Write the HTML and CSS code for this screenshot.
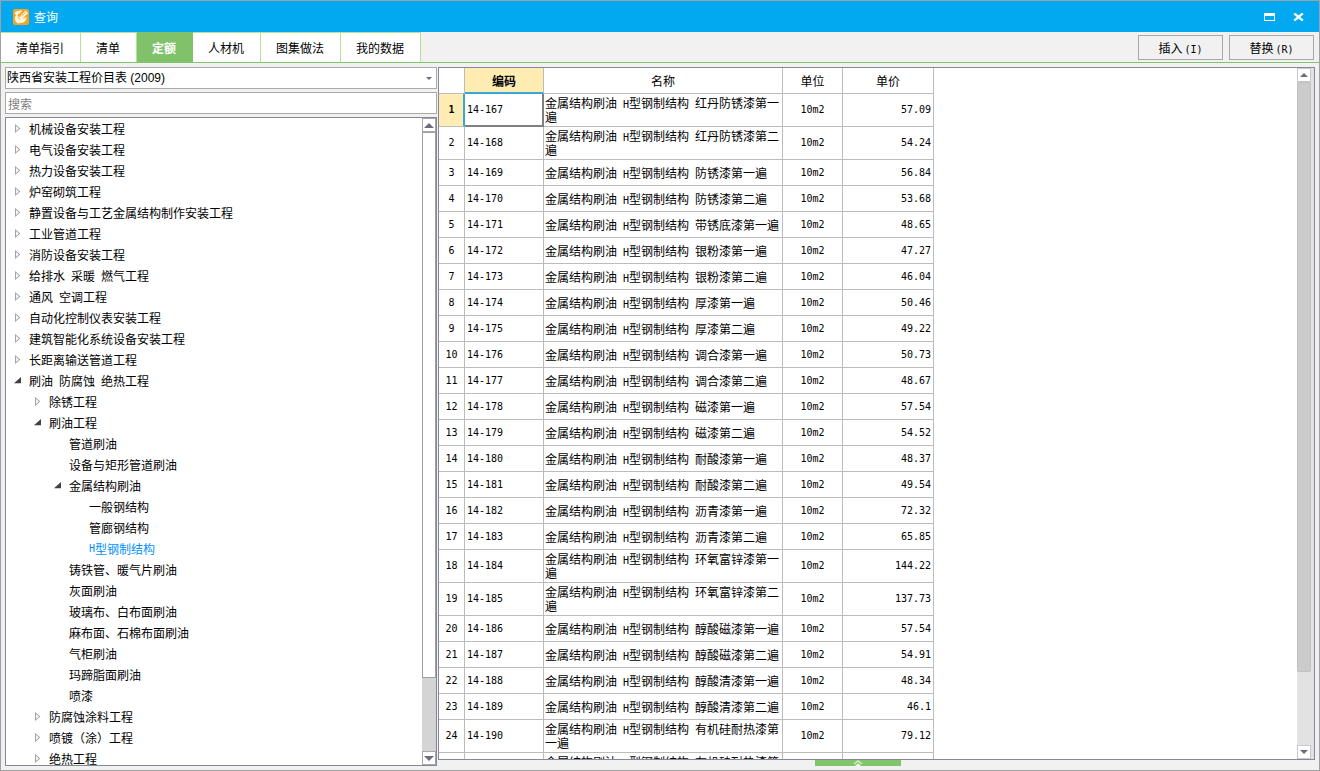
FILE: index.html
```html
<!DOCTYPE html>
<html lang="zh-CN">
<head>
<meta charset="utf-8">
<title>查询</title>
<link rel="stylesheet" href="styles.css">
</head>
<body>
<div class="window">
  <header class="titlebar">
    <svg class="logo" width="16" height="16" viewBox="0 0 16 16" aria-hidden="true">
      <rect width="16" height="16" rx="2" fill="#f9a21b"/>
      <path d="M1.500 3.500Q5 1 9.500 1.500L6.500 4.800Q5 4.500 4.500 6L6 8.500L12.500 1.500L15 4L9 10.200L13.500 8Q13.500 12 10 13.800L5 14.500Q1.500 12.500 1.800 8.500L3 6.500Z" fill="#fff5e2"/>
      <path d="M4.500 8L7.500 11M8.500 7.500L12.500 3.500" stroke="#f9a21b" stroke-width="0.800" fill="none"/>
    </svg>
    <h1 class="title">查询</h1>
    <button class="winbtn" aria-label="最大化"><svg width="11" height="8" viewBox="0 0 11 8" shape-rendering="crispEdges"><path d="M0 0H11V8H0ZM1 3V7H10V3Z" fill="#fff" fill-rule="evenodd"/></svg></button>
    <button class="winbtn" aria-label="关闭"><svg width="11" height="8" viewBox="0 0 11 8"><path d="M1.200 0.300L9.800 7.700M9.800 0.300L1.200 7.700" stroke="#fff" stroke-width="2.200"/></svg></button>
  </header>

  <nav class="toolbar">
    <button class="tab">清单指引</button>
    <button class="tab">清单</button>
    <button class="tab active">定额</button>
    <button class="tab">人材机</button>
    <button class="tab">图集做法</button>
    <button class="tab">我的数据</button>
    <div class="actions">
      <button class="action">插入<i>(I)</i></button>
      <button class="action">替换<i>(R)</i></button>
    </div>
  </nav>

  <main class="content">
    <section class="side">
      <select class="field book" aria-label="定额库"><option>陕西省安装工程价目表 (2009)</option></select>
      <input class="field" type="text" placeholder="搜索" aria-label="搜索">
      <div class="treebox">
        <ul class="tree">
          <li class="node closed">机械设备安装工程</li>
          <li class="node closed">电气设备安装工程</li>
          <li class="node closed">热力设备安装工程</li>
          <li class="node closed">炉窑砌筑工程</li>
          <li class="node closed">静置设备与工艺金属结构制作安装工程</li>
          <li class="node closed">工业管道工程</li>
          <li class="node closed">消防设备安装工程</li>
          <li class="node closed">给排水<i> </i>采暖<i> </i>燃气工程</li>
          <li class="node closed">通风<i> </i>空调工程</li>
          <li class="node closed">自动化控制仪表安装工程</li>
          <li class="node closed">建筑智能化系统设备安装工程</li>
          <li class="node closed">长距离输送管道工程</li>
          <li class="node open">刷油<i> </i>防腐蚀<i> </i>绝热工程</li>
          <li class="node closed l1">除锈工程</li>
          <li class="node open l1">刷油工程</li>
          <li class="node l2">管道刷油</li>
          <li class="node l2">设备与矩形管道刷油</li>
          <li class="node open l2">金属结构刷油</li>
          <li class="node l3">一般钢结构</li>
          <li class="node l3">管廊钢结构</li>
          <li class="node l3 current"><i>H</i>型钢制结构</li>
          <li class="node l2">铸铁管、暖气片刷油</li>
          <li class="node l2">灰面刷油</li>
          <li class="node l2">玻璃布、白布面刷油</li>
          <li class="node l2">麻布面、石棉布面刷油</li>
          <li class="node l2">气柜刷油</li>
          <li class="node l2">玛蹄脂面刷油</li>
          <li class="node l2">喷漆</li>
          <li class="node closed l1">防腐蚀涂料工程</li>
          <li class="node closed l1">喷镀（涂）工程</li>
          <li class="node closed l1">绝热工程</li>
        </ul>
        <div class="scroll">
          <button class="arrow" aria-label="向上滚动"><svg width="10" height="5" viewBox="0 0 10 5"><path d="M0 5L5 0L10 5Z"/></svg></button>
          <div class="thumb"></div>
          <div class="track"></div>
          <button class="arrow" aria-label="向下滚动"><svg width="10" height="5" viewBox="0 0 10 5"><path d="M0 0L5 5L10 0Z"/></svg></button>
        </div>
      </div>
    </section>

    <section class="main">
      <div class="gridbox">
        <div class="gridview">
          <table class="grid">
            <colgroup><col class="c-no"><col class="c-code"><col class="c-name"><col class="c-unit"><col class="c-price"></colgroup>
            <thead><tr><th></th><th class="picked">编码</th><th>名称</th><th>单位</th><th>单价</th></tr></thead>
            <tbody>
              <tr><th class="picked">1</th><td class="focus">14-167</td><td>金属结构刷油<i> H</i>型钢制结构<i> </i>红丹防锈漆第一遍</td><td>10m2</td><td>57.09</td></tr>
              <tr><th>2</th><td>14-168</td><td>金属结构刷油<i> H</i>型钢制结构<i> </i>红丹防锈漆第二遍</td><td>10m2</td><td>54.24</td></tr>
              <tr><th>3</th><td>14-169</td><td>金属结构刷油<i> H</i>型钢制结构<i> </i>防锈漆第一遍</td><td>10m2</td><td>56.84</td></tr>
              <tr><th>4</th><td>14-170</td><td>金属结构刷油<i> H</i>型钢制结构<i> </i>防锈漆第二遍</td><td>10m2</td><td>53.68</td></tr>
              <tr><th>5</th><td>14-171</td><td>金属结构刷油<i> H</i>型钢制结构<i> </i>带锈底漆第一遍</td><td>10m2</td><td>48.65</td></tr>
              <tr><th>6</th><td>14-172</td><td>金属结构刷油<i> H</i>型钢制结构<i> </i>银粉漆第一遍</td><td>10m2</td><td>47.27</td></tr>
              <tr><th>7</th><td>14-173</td><td>金属结构刷油<i> H</i>型钢制结构<i> </i>银粉漆第二遍</td><td>10m2</td><td>46.04</td></tr>
              <tr><th>8</th><td>14-174</td><td>金属结构刷油<i> H</i>型钢制结构<i> </i>厚漆第一遍</td><td>10m2</td><td>50.46</td></tr>
              <tr><th>9</th><td>14-175</td><td>金属结构刷油<i> H</i>型钢制结构<i> </i>厚漆第二遍</td><td>10m2</td><td>49.22</td></tr>
              <tr><th>10</th><td>14-176</td><td>金属结构刷油<i> H</i>型钢制结构<i> </i>调合漆第一遍</td><td>10m2</td><td>50.73</td></tr>
              <tr><th>11</th><td>14-177</td><td>金属结构刷油<i> H</i>型钢制结构<i> </i>调合漆第二遍</td><td>10m2</td><td>48.67</td></tr>
              <tr><th>12</th><td>14-178</td><td>金属结构刷油<i> H</i>型钢制结构<i> </i>磁漆第一遍</td><td>10m2</td><td>57.54</td></tr>
              <tr><th>13</th><td>14-179</td><td>金属结构刷油<i> H</i>型钢制结构<i> </i>磁漆第二遍</td><td>10m2</td><td>54.52</td></tr>
              <tr><th>14</th><td>14-180</td><td>金属结构刷油<i> H</i>型钢制结构<i> </i>耐酸漆第一遍</td><td>10m2</td><td>48.37</td></tr>
              <tr><th>15</th><td>14-181</td><td>金属结构刷油<i> H</i>型钢制结构<i> </i>耐酸漆第二遍</td><td>10m2</td><td>49.54</td></tr>
              <tr><th>16</th><td>14-182</td><td>金属结构刷油<i> H</i>型钢制结构<i> </i>沥青漆第一遍</td><td>10m2</td><td>72.32</td></tr>
              <tr><th>17</th><td>14-183</td><td>金属结构刷油<i> H</i>型钢制结构<i> </i>沥青漆第二遍</td><td>10m2</td><td>65.85</td></tr>
              <tr><th>18</th><td>14-184</td><td>金属结构刷油<i> H</i>型钢制结构<i> </i>环氧富锌漆第一遍</td><td>10m2</td><td>144.22</td></tr>
              <tr><th>19</th><td>14-185</td><td>金属结构刷油<i> H</i>型钢制结构<i> </i>环氧富锌漆第二遍</td><td>10m2</td><td>137.73</td></tr>
              <tr><th>20</th><td>14-186</td><td>金属结构刷油<i> H</i>型钢制结构<i> </i>醇酸磁漆第一遍</td><td>10m2</td><td>57.54</td></tr>
              <tr><th>21</th><td>14-187</td><td>金属结构刷油<i> H</i>型钢制结构<i> </i>醇酸磁漆第二遍</td><td>10m2</td><td>54.91</td></tr>
              <tr><th>22</th><td>14-188</td><td>金属结构刷油<i> H</i>型钢制结构<i> </i>醇酸清漆第一遍</td><td>10m2</td><td>48.34</td></tr>
              <tr><th>23</th><td>14-189</td><td>金属结构刷油<i> H</i>型钢制结构<i> </i>醇酸清漆第二遍</td><td>10m2</td><td>46.1</td></tr>
              <tr><th>24</th><td>14-190</td><td>金属结构刷油<i> H</i>型钢制结构<i> </i>有机硅耐热漆第一遍</td><td>10m2</td><td>79.12</td></tr>
              <tr><th></th><td></td><td>金属结构刷油<i> H</i>型钢制结构<i> </i>有机硅耐热漆第二遍</td><td></td><td></td></tr>
            </tbody>
          </table>
        </div>
        <div class="scroll flat">
          <button class="arrow" aria-label="向上滚动"><svg width="8" height="4" viewBox="0 0 8 4"><path d="M0 4L4 0L8 4Z"/></svg></button>
          <div class="thumb"></div>
          <div class="track"></div>
          <button class="arrow" aria-label="向下滚动"><svg width="8" height="4" viewBox="0 0 8 4"><path d="M0 0L4 4L8 0Z"/></svg></button>
        </div>
      </div>
      <button class="expander" aria-label="展开"><svg width="10" height="6" viewBox="0 0 10 6"><path d="M1 4L5 1L9 4" fill="none" stroke="#d5f0c9" stroke-width="1.500"/><path d="M2 6L5 3.500L8 6Z" fill="#fff"/></svg></button>
    </section>
  </main>
</div>
</body>
</html>
```
FILE: styles.css
```css
* { box-sizing: border-box; }

body {
  margin: 0;
  font: 12px/14px "Noto Sans CJK SC", sans-serif;
  color: #000;
}

button, select, input {
  margin: 0;
  padding: 0;
  border: 0;
  border-radius: 0;
  font: inherit;
  color: inherit;
  background: none;
}

/* Half-width characters inside Chinese text */
i {
  font: 10px/1 "DejaVu Sans Mono", monospace;
}

.window {
  display: flex;
  flex-direction: column;
  height: 100vh;
  border: 1px solid #a0a0a0;
  background: #f1f1f1;
  overflow: hidden;
}

/* Title bar */
.titlebar {
  display: flex;
  align-items: center;
  flex: none;
  height: 31px;
  padding: 0 13px 0 12px;
  background: #02a9f1;
  color: #fff;
}
.logo { margin-right: 5px; }
.title {
  flex: 1;
  margin: 0;
  font-size: 12px;
  font-weight: 400;
}
.winbtn {
  display: flex;
  align-items: center;
  justify-content: center;
  width: 15px;
  height: 15px;
}
.winbtn + .winbtn { margin-left: 14px; }

/* Tabs and actions */
.toolbar {
  display: flex;
  flex: none;
  height: 31px;
  border-bottom: 1px solid #80c56c;
}
.tab {
  padding: 0 16px 0 15px;
  border-top: 1px solid #b4e29d;
  border-right: 1px solid #b4e29d;
  background: #fff;
}
.tab.active {
  border-color: #80c269;
  background: #80c269;
  color: #fff;
  font-weight: 700;
}
.actions {
  display: flex;
  gap: 6px;
  margin-left: auto;
  padding: 3px 5px 2px 0;
}
.action {
  width: 85px;
  border: 1px solid #a8a8a8;
}
.action i { margin-left: 2px; }

/* Panels */
.content {
  display: grid;
  grid-template-columns: 432px 1fr;
  gap: 1px;
  flex: 1;
  min-height: 0;
  padding: 4px;
}
.side, .main {
  display: flex;
  flex-direction: column;
  min-width: 0;
  min-height: 0;
}
.field {
  flex: none;
  height: 22px;
  margin-bottom: 3px;
  padding: 0 2px;
  border: 1px solid #a8aaac;
  background: #fff;
}
.field::placeholder { color: #808080; opacity: 1; }
.book {
  appearance: none;
  padding: 0 1px;
  font-family: "Liberation Sans", "Noto Sans CJK SC", sans-serif;
  background: #fff url("data:image/svg+xml,%3Csvg xmlns='http://www.w3.org/2000/svg' width='6' height='3'%3E%3Cpath d='M0 0H6L3 3Z' fill='%236b6d7b'/%3E%3C/svg%3E") no-repeat right 4px center;
}

/* Tree */
.treebox {
  display: flex;
  flex: 1;
  min-height: 0;
  border: 1px solid #84869a;
  background: #fff;
}
.tree {
  flex: 1;
  margin: 0;
  padding: 0;
  list-style: none;
  overflow: hidden;
}
.node {
  display: flex;
  align-items: center;
  height: 21px;
  padding-left: 23px;
  white-space: pre;
}
.node.l1 { padding-left: 43px; }
.node.l2 { padding-left: 63px; }
.node.l3 { padding-left: 83px; }
.node.current { color: #0091ff; }
.closed::before, .open::before {
  content: "";
  width: 7px;
  height: 9px;
  margin: 0 8px 0 -15px;
  background: #a0a0a0;
  clip-path: polygon(evenodd, 15% 0, 90% 50%, 15% 100%, 15% 0, 30% 22%, 30% 78%, 70% 50%, 30% 22%);
}
.open::before {
  height: 7px;
  background: #404040;
  clip-path: polygon(100% 0, 100% 90%, 0 90%);
}

/* Scroll bars */
.scroll {
  display: flex;
  flex-direction: column;
  flex: none;
  width: 14px;
  background: #d4d4d4;
}
.scroll .arrow {
  display: flex;
  align-items: center;
  justify-content: center;
  height: 14px;
  border: 1px solid #a8a8a8;
  background: #fff;
  fill: #6b6d7b;
}
.scroll .thumb {
  flex: 546;
  border: 1px solid #a0a0a0;
  background: #fff;
}
.scroll .track { flex: 73; }
.scroll.flat {
  width: 17px;
  padding-right: 3px;
  background: #e2e2e2;
}
.flat .arrow { border-color: #c8c8c8; }
.flat .thumb {
  flex: 590;
  border: 1px solid #c0c0c0;
  border-radius: 2px;
  background: #cbcbcb;
}

/* Data grid */
.gridbox {
  display: flex;
  flex: 1;
  min-height: 0;
  border: 1px solid #84889a;
  background: #fff;
}
.gridview {
  flex: 1;
  overflow: hidden;
}
.grid {
  width: 495px;
  table-layout: fixed;
  border-collapse: separate;
  border-spacing: 0;
}
.c-no { width: 26px; }
.c-code { width: 79px; }
.c-name { width: 239px; }
.c-unit { width: 60px; }
.c-price { width: 91px; }
.grid th, .grid td {
  height: 26px;
  padding: 2px 1px;
  border: solid #bcbcbc;
  border-width: 0 1px 1px 0;
  font-weight: 400;
}
.grid tbody th, .grid td {
  font: 10px/14px "DejaVu Sans Mono", monospace;
}
.grid td:nth-child(2) { padding-left: 2px; }
.grid td:nth-child(3) {
  font: 12px/14px "Noto Sans CJK SC", sans-serif;
}
.grid td:nth-child(4) { text-align: center; }
.grid td:nth-child(5) { padding-right: 2px; text-align: right; }
.grid .picked {
  background: #ffecb3;
  font-weight: 700;
}
.grid thead .picked {
  border-bottom-color: #34a8d8;
  box-shadow: inset 0 -1px #34a8d8;
}
.grid tbody .picked {
  border-right-color: #34a8d8;
  box-shadow: inset -1px 0 #34a8d8;
}
.grid .focus {
  border-color: #808080;
  box-shadow: inset -1px -1px #808080;
}

.expander {
  display: flex;
  align-items: flex-end;
  justify-content: center;
  flex: none;
  width: 86px;
  height: 6px;
  margin-left: 43%;
  background: #80c56c;
}
```
